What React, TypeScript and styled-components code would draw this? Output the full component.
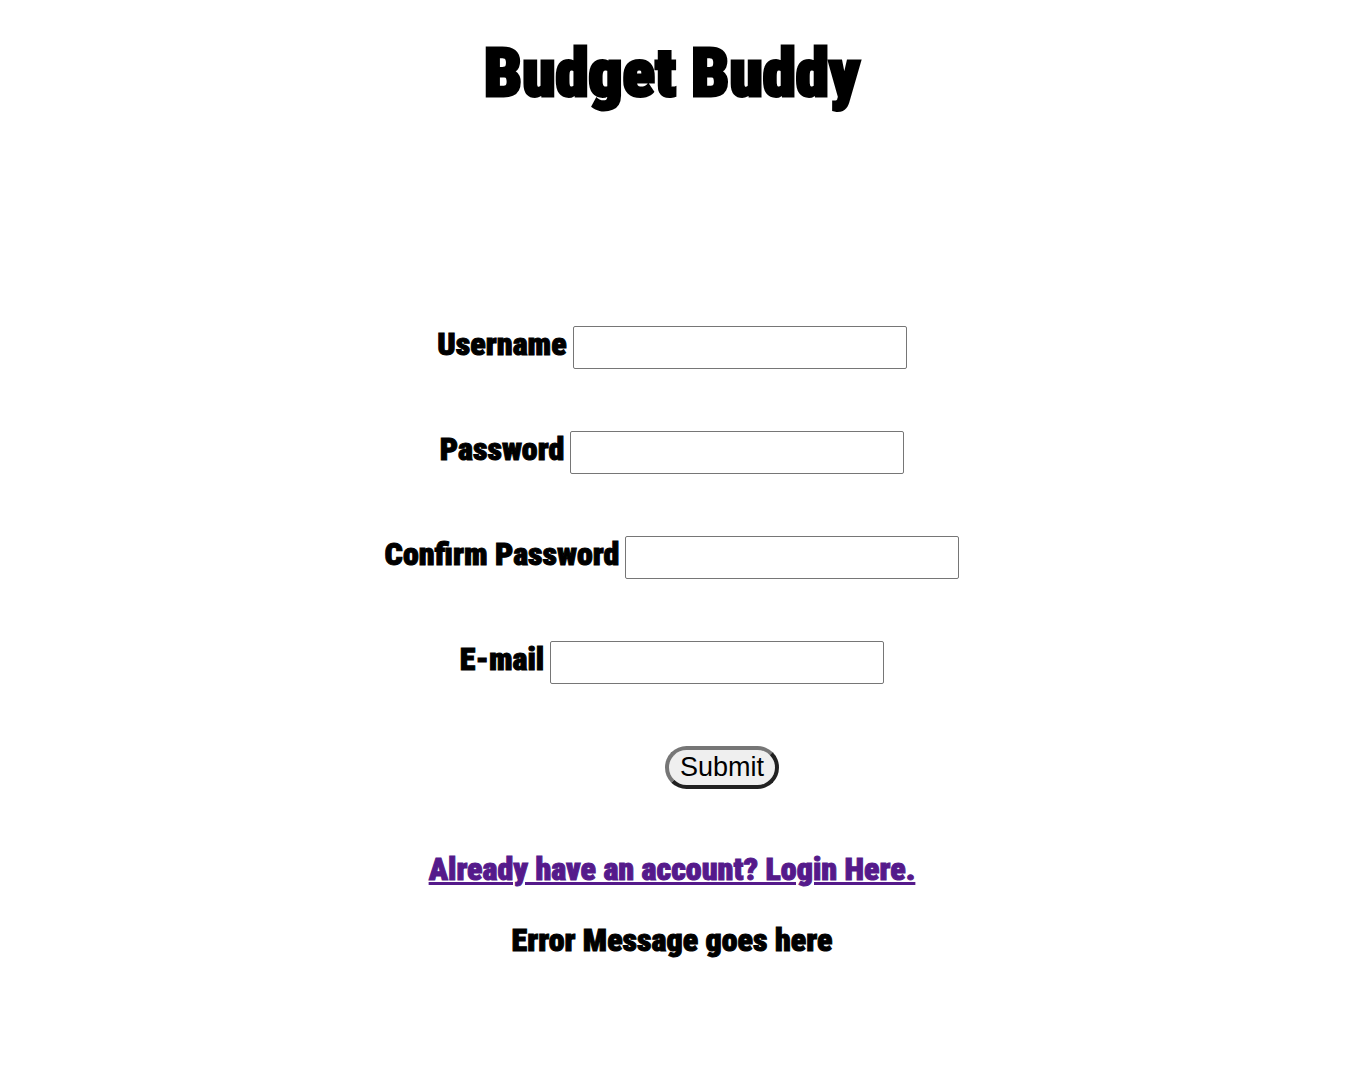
import React from "react";
import styled, { createGlobalStyle } from "styled-components";

const GlobalStyle = createGlobalStyle`
  body {
    margin: 0;
    background: #fff;
    color: #000;
    font-family: Impact, "Roboto Condensed", "Liberation Sans Narrow", "DejaVu Sans Condensed", sans-serif;
    font-size: 32px;
    font-weight: 900;
    line-height: 36px;
  }
`;

const Page = styled.main`
  display: flex;
  flex-direction: column;
  align-items: center;
  padding: 32px 18px 32px 0;
`;

const Title = styled.h1`
  margin: 0 0 212px;
  font-size: 67px;
  font-weight: 900;
  line-height: 82px;
  -webkit-text-stroke: 3px #000;
`;

const Form = styled.form`
  display: flex;
  flex-direction: column;
  align-items: center;
  gap: 62px;
  margin-bottom: 62px;
`;

const Field = styled.div`
  display: flex;
  align-items: flex-start;
  gap: 6px;
`;

const Label = styled.label`
  -webkit-text-stroke: 1px #000;
`;

const Input = styled.input`
  box-sizing: border-box;
  width: 334px;
  height: 43px;
  padding: 1px 2px;
  border: 1px solid #767676;
  border-radius: 2px;
  background: #fff;
  font: 400 27px/31px "Liberation Sans", Arial, sans-serif;
`;

const SubmitButton = styled.button`
  box-sizing: border-box;
  height: 43px;
  margin-left: 100px;
  padding: 0 11px;
  border: 4px solid;
  border-color: #767676 #212121 #212121 #767676;
  border-radius: 24px;
  background: #efefef;
  color: #000;
  font: 400 27px/31px "Liberation Sans", Arial, sans-serif;
`;

const LoginLink = styled.a`
  margin-bottom: 35px;
  color: #551a8b;
  text-decoration: underline;
  text-decoration-thickness: 3px;
  -webkit-text-stroke: 1px #551a8b;
`;

const Message = styled.p`
  margin: 0;
  -webkit-text-stroke: 1px #000;
`;

const fields = [
  { id: "username", label: "Username", type: "text" },
  { id: "password", label: "Password", type: "password" },
  { id: "confirm-password", label: "Confirm Password", type: "password" },
  { id: "email", label: "E-mail", type: "email" },
];

export default function App() {
  return (
    <>
      <GlobalStyle />
      <Page>
        <Title>Budget Buddy</Title>
        <Form onSubmit={(event) => event.preventDefault()}>
          {fields.map(({ id, label, type }) => (
            <Field key={id}>
              <Label htmlFor={id}>{label}</Label>
              <Input id={id} name={id} type={type} />
            </Field>
          ))}
          <SubmitButton type="submit">Submit</SubmitButton>
        </Form>
        <LoginLink href="#login">Already have an account? Login Here.</LoginLink>
        <Message>Error Message goes here</Message>
      </Page>
    </>
  );
}
